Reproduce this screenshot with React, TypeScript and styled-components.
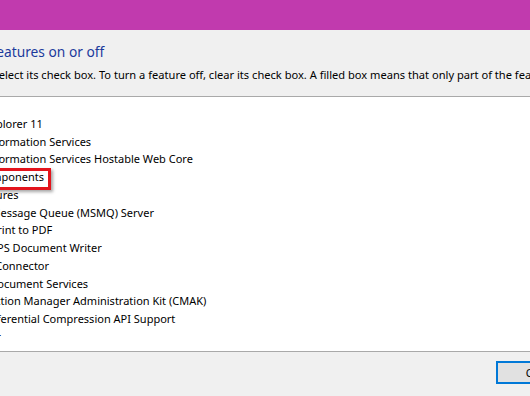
import * as React from "react";
import styled, { createGlobalStyle, css } from "styled-components";

type CheckState = "on" | "off" | "partial";

interface Feature {
  name: string;
  expandable?: boolean;
  state: CheckState;
  highlight?: boolean;
}

const features: Feature[] = [
  { name: "Hyper-V", expandable: true, state: "off" },
  { name: "Internet Explorer 11", state: "on" },
  { name: "Internet Information Services", expandable: true, state: "off" },
  { name: "Internet Information Services Hostable Web Core", state: "off" },
  { name: "Legacy Components", expandable: true, state: "off", highlight: true },
  { name: "Media Features", expandable: true, state: "on" },
  { name: "Microsoft Message Queue (MSMQ) Server", expandable: true, state: "off" },
  { name: "Microsoft Print to PDF", state: "on" },
  { name: "Microsoft XPS Document Writer", state: "on" },
  { name: "MultiPoint Connector", state: "off" },
  { name: "Print and Document Services", expandable: true, state: "partial" },
  { name: "RAS Connection Manager Administration Kit (CMAK)", state: "off" },
  { name: "Remote Differential Compression API Support", state: "on" },
  { name: "RIP Listener", state: "off" },
  { name: "Services for NFS", expandable: true, state: "off" },
  { name: "Simple Network Management Protocol (SNMP)", state: "off" }
];

const GlobalStyle = createGlobalStyle`
  html, body {
    margin: 0;
    padding: 0;
    background: #f0f0f0;
    overflow: hidden;
  }
  body {
    font-family: "Noto Sans", "Open Sans", sans-serif;
    font-size: 11px;
    color: #000;
  }
`;

const Window = styled.div`
  width: 785px;
  height: 396px;
  margin-left: -120px;
  display: flex;
  flex-direction: column;
  background: #f0f0f0;
`;

const TitleBar = styled.div`
  height: 30px;
  flex: 0 0 auto;
  background: #c13aae;
  display: flex;
  align-items: center;
  padding: 0 0 0 8px;
  color: #fff;
  font-size: 11px;
`;

const TitleText = styled.span`
  flex: 1 1 auto;
`;

const CloseButton = styled.span`
  width: 46px;
  text-align: center;
  font-size: 14px;
`;

const Body = styled.div`
  flex: 1 1 auto;
  display: flex;
  flex-direction: column;
  padding: 12px 11px 0 16px;
  min-height: 0;
`;

const Heading = styled.div`
  font-size: 13.75px;
  line-height: 20px;
  color: #1b3a9c;
  white-space: nowrap;
`;

const Description = styled.div`
  margin: 5px 0 0 -12px;
  font-size: 11.1px;
  line-height: 16px;
  white-space: nowrap;
`;

const TreeBox = styled.ul`
  margin: 13px 0 0 -2px;
  padding: 0;
  list-style: none;
  height: 255px;
  border: 1px solid #a9a9a9;
  background: #fff;
  overflow: hidden;
`;

const Row = styled.li`
  height: 17.75px;
  display: flex;
  align-items: center;
  padding-left: 4px;
  white-space: nowrap;
`;

const Expander = styled.span`
  width: 16px;
  flex: 0 0 16px;
  font-size: 9px;
  color: #444;
  text-align: center;
`;

const CheckBox = styled.span<{ $state: CheckState }>`
  width: 11px;
  height: 11px;
  flex: 0 0 11px;
  margin: 0 7px 0 4px;
  border: 1px solid #333;
  background: #fff;
  position: relative;
  ${(p) =>
    p.$state === "partial" &&
    css`
      &::after {
        content: "";
        position: absolute;
        inset: 2px;
        background: #333;
      }
    `}
  ${(p) =>
    p.$state === "on" &&
    css`
      &::after {
        content: "";
        position: absolute;
        left: 3px;
        top: 0px;
        width: 3px;
        height: 7px;
        border: solid #333;
        border-width: 0 2px 2px 0;
        transform: rotate(45deg);
      }
    `}
`;

const Label = styled.span<{ $highlight?: boolean }>`
  position: relative;
  line-height: 17.75px;
  ${(p) =>
    p.$highlight &&
    css`
      &::after {
        content: "";
        position: absolute;
        left: -40px;
        right: -7px;
        top: 0;
        bottom: -4px;
        border: 3px solid #e3141c;
        box-shadow: 2px 2px 3px rgba(0, 0, 0, 0.35);
      }
    `}
`;

const Footer = styled.div`
  flex: 0 0 auto;
  display: flex;
  justify-content: flex-end;
  gap: 8px;
  padding: 9px 11px 12px 0;
`;

const Button = styled.button<{ $default?: boolean }>`
  width: 75px;
  height: 23px;
  font-family: inherit;
  font-size: 11px;
  background: #e1e1e1;
  color: #000;
  border: ${(p) => (p.$default ? "2px solid #0078d7" : "1px solid #adadad")};
  padding: 0;
`;

export default function App() {
  return (
    <>
      <GlobalStyle />
      <Window>
        <TitleBar>
          <TitleText>Windows Features</TitleText>
          <CloseButton>✕</CloseButton>
        </TitleBar>
        <Body>
          <Heading>Turn Windows features on or off</Heading>
          <Description>
            To turn a feature on, select its check box. To turn a feature off,
            clear its check box. A filled box means that only part of the
            feature is turned on.
          </Description>
          <TreeBox>
            {features.map((f, i) => (
              <Row key={i}>
                <Expander>{f.expandable ? "▸" : ""}</Expander>
                <CheckBox $state={f.state} />
                <Label $highlight={f.highlight}>{f.name}</Label>
              </Row>
            ))}
          </TreeBox>
        </Body>
        <Footer>
          <Button $default>OK</Button>
          <Button>Cancel</Button>
        </Footer>
      </Window>
    </>
  );
}
